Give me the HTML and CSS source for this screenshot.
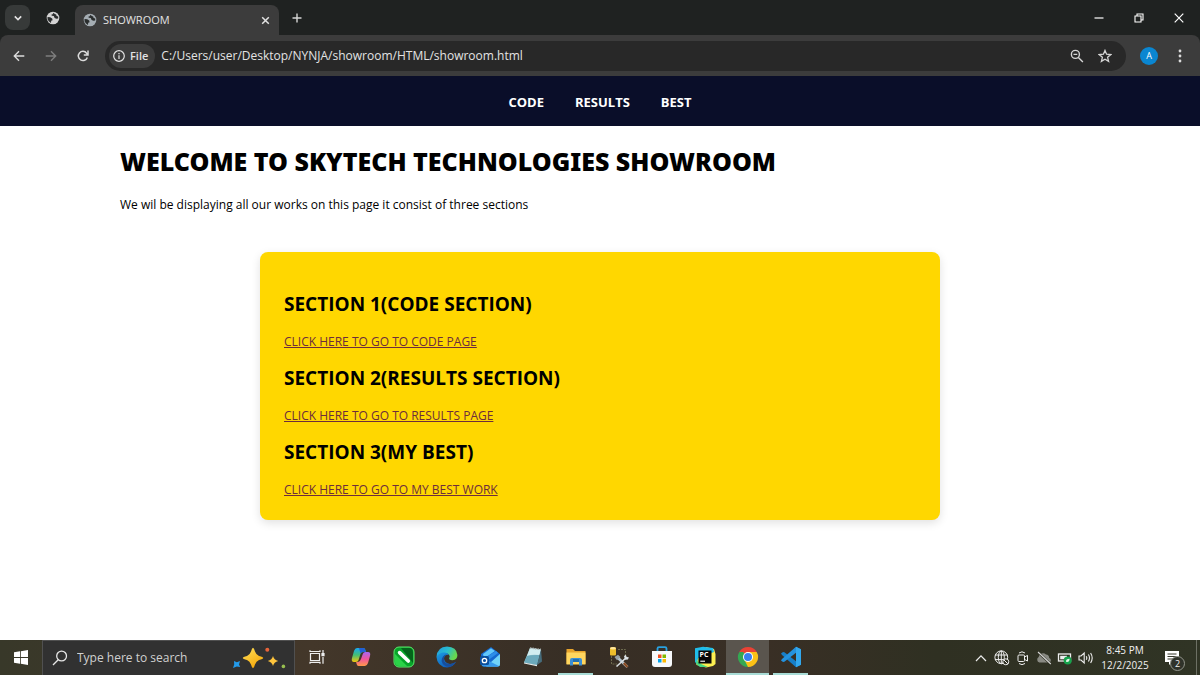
FILE: index.html
```html
<!DOCTYPE html>
<html lang="en">
<head>
<meta charset="utf-8">
<title>SHOWROOM</title>
<link rel="stylesheet" href="styles.css">
</head>
<body>
<svg class="defs" aria-hidden="true">
  <symbol id="globe" viewBox="0 0 14 14">
    <circle cx="7" cy="7" r="6.3" fill="currentColor"/>
    <path d="M1.5 6 L4.2 6.2 L6.2 7.4 L6.6 9.2 L5.2 9.8 L5 12 L3 10.6 L1.6 8.4 Z M7.6 1.8 L6.6 3.2 L5.3 3.8 L5.8 4.8 L7.8 5 L8.6 7 L10.4 7.8 L12.2 7.4 L12.2 5.6 L10.6 5 L10.2 3.4 L8.8 3 Z" fill="#2a2d2d"/>
  </symbol>
</svg>

<header class="browser">
  <div class="tabstrip">
    <button class="tab-search" aria-label="Search tabs"><svg width="10" height="10" viewBox="0 0 10 10" fill="none" stroke="#e3e3e3" stroke-width="1.6"><path d="M1.8 3.4 L5 6.6 L8.2 3.4"/></svg></button>
    <button class="tab-mini" aria-label="Tab"><svg width="14" height="14"><use href="#globe"/></svg></button>
    <div class="tab">
      <svg class="favicon" width="14" height="14"><use href="#globe"/></svg>
      <span class="tab-title">SHOWROOM</span>
      <button aria-label="Close tab"><svg width="9" height="9" viewBox="0 0 9 9" stroke="#e3e3e3" stroke-width="1.5"><path d="M1.2 1.2 L7.8 7.8 M7.8 1.2 L1.2 7.8"/></svg></button>
    </div>
    <button class="new-tab" aria-label="New tab"><svg width="10" height="10" viewBox="0 0 10 10" stroke="#d5d5d5" stroke-width="1.4"><path d="M5 .5 V9.5 M.5 5 H9.5"/></svg></button>
    <div class="window-controls">
      <button aria-label="Minimize"><svg width="10" height="10" viewBox="0 0 10 10" stroke="#fff" stroke-width="1.2"><path d="M.5 5 H9.5"/></svg></button>
      <button aria-label="Restore"><svg width="10" height="10" viewBox="0 0 10 10" fill="none" stroke="#fff" stroke-width="1.1"><path d="M1 3 H7 V9 H1 Z M3 3 V1 H9 V7 H7"/></svg></button>
      <button aria-label="Close"><svg width="10" height="10" viewBox="0 0 10 10" stroke="#fff" stroke-width="1.2"><path d="M.7 .7 L9.3 9.3 M9.3 .7 L.7 9.3"/></svg></button>
    </div>
  </div>
  <div class="toolbar">
    <button class="tool" aria-label="Back"><svg width="12" height="12" viewBox="0 0 12 12" fill="none" stroke="#dcdcdc" stroke-width="1.4"><path d="M11.3 6 H1.5 M6 1.3 L1.3 6 L6 10.7"/></svg></button>
    <button class="tool" aria-label="Forward"><svg width="12" height="12" viewBox="0 0 12 12" fill="none" stroke="#7d7d7d" stroke-width="1.4"><path d="M.7 6 H10.5 M6 1.3 L10.7 6 L6 10.7"/></svg></button>
    <button class="tool" aria-label="Reload"><svg width="12" height="12" viewBox="0 0 12 12" fill="none" stroke="#dcdcdc" stroke-width="1.5"><path d="M10.3 7.4 A4.6 4.6 0 1 1 9.6 3.2 L10.8 4.6 M11 .6 V4.9 H6.8"/></svg></button>
    <div class="omnibox">
      <button class="scheme"><svg width="12" height="12" viewBox="0 0 12 12" fill="none" stroke="#e3e3e3" stroke-width="1.2"><circle cx="6" cy="6" r="5.3"/><path d="M6 5.2 V9 M6 2.9 V4.2"/></svg>File</button>
      <input class="address" type="text" aria-label="Address" value="C:/Users/user/Desktop/NYNJA/showroom/HTML/showroom.html">
      <button class="tool" aria-label="Zoom"><svg width="14" height="14" viewBox="0 0 14 14" fill="none" stroke="#d5d5d5" stroke-width="1.4"><circle cx="5.4" cy="5.4" r="4"/><path d="M8.4 8.4 L12.9 12.9 M3.5 5.4 H7.3"/></svg></button>
      <button class="tool" aria-label="Bookmark"><svg width="14" height="14" viewBox="0 0 14 14" fill="none" stroke="#d5d5d5" stroke-width="1.3"><path d="M7 1.4 L8.6 5.2 L12.8 5.6 L9.6 8.3 L10.6 12.4 L7 10.2 L3.4 12.4 L4.4 8.3 L1.2 5.6 L5.4 5.2 Z"/></svg></button>
    </div>
    <button class="avatar" aria-label="Profile">A</button>
    <button class="tool" aria-label="Menu"><svg width="4" height="14" viewBox="0 0 4 14" fill="#dcdcdc"><circle cx="2" cy="2" r="1.4"/><circle cx="2" cy="7" r="1.4"/><circle cx="2" cy="12" r="1.4"/></svg></button>
  </div>
</header>

<nav class="site-nav">
  <a href="#code">CODE</a>
  <a href="#results">RESULTS</a>
  <a href="#best">BEST</a>
</nav>

<main class="page">
  <h1>WELCOME TO SKYTECH TECHNOLOGIES SHOWROOM</h1>
  <p class="intro">We wil be displaying all our works on this page it consist of three sections</p>
  <div class="card">
    <section id="code"><h2>SECTION 1(CODE SECTION)</h2><a href="#code">CLICK HERE TO GO TO CODE PAGE</a></section>
    <section id="results"><h2>SECTION 2(RESULTS SECTION)</h2><a href="#results">CLICK HERE TO GO TO RESULTS PAGE</a></section>
    <section id="best"><h2>SECTION 3(MY BEST)</h2><a href="#best">CLICK HERE TO GO TO MY BEST WORK</a></section>
  </div>
</main>

<footer class="taskbar">
  <button class="start" aria-label="Start"><svg width="14" height="15" viewBox="0 0 14 15" fill="#fff"><path d="M0 2.2 L6 1.3 V7.1 H0 Z M6.8 1.2 L14 .1 V7.1 H6.8 Z M0 7.9 H6 V13.7 L0 12.8 Z M6.8 7.9 H14 V14.9 L6.8 13.8 Z"/></svg></button>
  <div class="search">
    <svg width="16" height="16" viewBox="0 0 16 16" fill="none" stroke="#e6e6e6" stroke-width="1.3"><circle cx="9.6" cy="6" r="4.9"/><path d="M6.2 9.7 L1 15"/></svg>
    <input type="text" aria-label="Type here to search" placeholder="Type here to search">
    <svg width="54" height="22" viewBox="0 0 54 22">
      <defs><linearGradient id="gold" x2="0.6" y2="1"><stop offset="0" stop-color="#ffe15a"/><stop offset="1" stop-color="#f5a80c"/></linearGradient></defs>
      <path d="M21 .8 Q22 .8 23 4.5 Q24.2 8 27 9 Q31.2 10 31.2 11 Q31.2 12 27 13 Q24.2 14 23 17.5 Q22 21.2 21 21.2 Q20 21.2 19 17.5 Q17.8 14 15 13 Q10.8 12 10.8 11 Q10.8 10 15 9 Q17.8 8 19 4.5 Q20 .8 21 .8 Z" fill="url(#gold)"/>
      <path d="M41 9 Q42 12.8 46.2 14 Q42 15.2 41 19 Q40 15.2 35.8 14 Q40 12.8 41 9 Z" fill="#ffc53d"/>
      <path d="M2 14 L4.8 15.2 L8 14 L7 17.5 L8.2 20 L4.8 19.4 L1 21 L2.2 17.5 Z" fill="#249bea"/>
      <circle cx="35.3" cy="2.8" r="2" fill="#e8643a"/><circle cx="51.4" cy="19.4" r="1.8" fill="#98bf50"/>
    </svg>
  </div>
  <div class="apps">
    <button class="task-view" aria-label="Task view"><svg width="16" height="16" viewBox="0 0 16 16" fill="none" stroke="#eee" stroke-width="1.2"><path d="M1.5 4.5 H10.5 V11.5 H1.5 Z M1 1.2 V2.5 H11 V1.2 M1 14.8 V13.4 H11 V14.8 M14 1 V4 M14 8 V14.8"/><path d="M13 4.6 H15 V6.6 H13 Z" fill="#eee"/></svg></button>
    <button aria-label="Copilot"><svg width="20" height="20" viewBox="0 0 20 20">
      <defs><linearGradient id="cpa" x2="0" y2="1"><stop offset="0" stop-color="#17a8f2"/><stop offset=".5" stop-color="#43bf75"/><stop offset="1" stop-color="#f3c50d"/></linearGradient><linearGradient id="cpb" x2="0" y2="1"><stop offset="0" stop-color="#a766f3"/><stop offset=".5" stop-color="#f0549d"/><stop offset="1" stop-color="#ff9848"/></linearGradient></defs>
      <path d="M6 1 H12.5 Q14 1 14.4 3 L14.9 5 H12 Q10 5 9.4 7 L7.6 13 Q7 15 5 15 H3 Q0 15 1 11 L3 4 Q4 1 6 1 Z" fill="url(#cpa)"/>
      <path d="M14 19 H7.5 Q6 19 5.6 17 L5.1 15 H7 Q9 15 10 12 L11.8 7 Q12.4 5 14.5 5 H17 Q20 5 19 9 L17 16 Q16 19 14 19 Z" fill="url(#cpb)"/>
      <path d="M8 1 H12.5 Q14 1 14.9 5 H12 Q10 5 9.5 6.5 Z" fill="#2160d6"/></svg></button>
    <button aria-label="CorelDRAW"><svg width="22" height="22" viewBox="0 0 22 22"><rect x="1" y="1" width="20" height="20" rx="5" fill="#08a52a" stroke="#5de66b"/><path d="M8 2 H16 Q20 2 20 7 V17 Z" fill="#04641b"/><path d="M2 8 L14 20 H6 Q2 20 2 16 Z" fill="#2bd348"/><path d="M6.6 6.6 L15.3 15" stroke="#fff" stroke-width="3.6" stroke-linecap="round"/></svg></button>
    <button aria-label="Edge"><svg width="22" height="22" viewBox="0 0 22 22">
      <defs><linearGradient id="edg" x2="1" y2=".4"><stop offset="0" stop-color="#239be0"/><stop offset=".55" stop-color="#28bdcf"/><stop offset="1" stop-color="#68d84d"/></linearGradient><linearGradient id="edb" x2=".7" y2="1"><stop offset="0" stop-color="#1b9de2"/><stop offset="1" stop-color="#1059b8"/></linearGradient></defs>
      <path d="M.5 11 Q1.2 1 11 .6 Q20.7 1 21.4 9 Q21.4 14 16.5 14.2 Q12.5 14 13.2 12 Q14.4 10.5 13 8.7 Q11 6.4 7.5 7.2 Q3 8 .5 11 Z" fill="url(#edg)"/>
      <path d="M.5 11 Q3.5 5.8 9 6.6 Q11.8 7.2 12.8 8.8 Q8.8 8.2 8 12 Q8 17.2 14 17.9 Q17.6 18.1 20 15.8 Q17 21.4 11 21.4 Q1.2 20.8 .5 11 Z" fill="url(#edb)"/>
      <path d="M8 12 Q7.4 18 14 18.1 Q18 18 20 15.8 Q18.5 19.2 14 20.8 Q7 21 5.6 15 Q5.8 9.5 11 8.3 Q8.5 9.2 8 12 Z" fill="#174e9d"/></svg></button>
    <button aria-label="Outlook"><svg width="22" height="22" viewBox="0 0 22 22"><path d="M2 8 L12 1 L21 8 V18 Q21 20.5 18.5 20.5 H5 Q2.5 20.5 2.5 18 Z" fill="#1568cf"/><path d="M4 8 L12 2.3 L16 5 L5 12.5 Z" fill="#61c7fb"/><path d="M5 12.5 L17 5 L19 7 L8 15 Z" fill="#2c8ee9"/><path d="M21 8 V18 Q21 20.5 18.5 20.5 H7 Z" fill="#71d3fa"/><path d="M3 12 L12 16 L19.8 20 Q19 20.5 18 20.5 H5 Q2.5 20.5 2.5 18 Z" fill="#3599ed"/><rect x="1" y="10" width="9" height="9" rx="1.6" fill="#0b4f9d"/><circle cx="5.5" cy="14.5" r="2.2" fill="none" stroke="#fff" stroke-width="1.3"/></svg></button>
    <button aria-label="Notepad"><svg width="22" height="22" viewBox="0 0 22 22"><path d="M8 2 L19 3.4 L15 19 L2 16.5 Z" fill="#91c4cf"/><path d="M8 2 L19 3.4 L17.5 9 Q10 8 5 10 Z" fill="#d2edf0"/><path d="M5 10 Q11 8.6 17.5 9 L15 19 L2 16.5 Z" fill="#6caabc"/><path d="M19 3.4 L20 15.4 L15 19 Z" fill="#476d7c"/><path d="M2 16.5 L15 19 L15 20.3 L2 17.5 Z" fill="#e6ecec"/><path d="M8 2 L19 3.4" stroke="#a9b2b1" stroke-width="1.5" stroke-dasharray="1.5 1"/></svg></button>
    <button class="open" aria-label="File Explorer"><svg width="22" height="20" viewBox="0 0 22 20"><path d="M1.5 2 H8 L10 4 H20.5 V17 H1.5 Z" fill="#e7a42c"/><path d="M1.5 5.5 H20.5 V17.5 H1.5 Z" fill="#ffd65f"/><path d="M5 18.5 V13 Q5 11 7 11 H15 Q17 11 17 13 V18.5 H14 V15 H8 V18.5 Z" fill="#3b8ed4"/><path d="M8 12 H14 V15 H8 Z" fill="#236fad"/></svg></button>
    <button aria-label="Tools"><svg width="22" height="22" viewBox="0 0 22 22"><path d="M10 3.5 H17.5 V10 M3.5 10 V18 H9" fill="none" stroke="#6d6a4e" stroke-dasharray="2 1"/><rect x="2" y="1.5" width="6" height="8" rx="1" fill="#edbd2c"/><ellipse cx="5" cy="2.2" rx="3" ry="1.2" fill="#ffe69a"/><path d="M9 11 L19.5 21" stroke="#b4c4ce" stroke-width="2.6"/><path d="M19 11 L8.5 20.5" stroke="#dbe0e2" stroke-width="1.6"/><path d="M6.5 11 L10 8.8 L12.5 11 L9 14.2 Z" fill="#97a2a8"/><path d="M16 10 L18 8.8 L18.3 11 L20.8 11.2 L20 13.5 L17 13.8 Z" fill="#dce3e7"/><path d="M15.8 17 L19.5 21" stroke="#8b4d24" stroke-width="2.4"/></svg></button>
    <button aria-label="Microsoft Store"><svg width="22" height="22" viewBox="0 0 22 22"><path d="M6.5 6 V2.5 Q6.5 1.2 8 1.2 H14 Q15.5 1.2 15.5 2.5 V6" fill="none" stroke="#29a1df" stroke-width="1.8"/><path d="M1 5 H21 V18 Q21 21 18 21 H4 Q1 21 1 18 Z" fill="#f7f9fb"/><path d="M7 8.5 H10.5 V12 H7 Z" fill="#f25022"/><path d="M11.5 8.5 H15 V12 H11.5 Z" fill="#7fba00"/><path d="M7 13 H10.5 V16.5 H7 Z" fill="#00a4ef"/><path d="M11.5 13 H15 V16.5 H11.5 Z" fill="#ffb900"/></svg></button>
    <button aria-label="PyCharm"><svg width="22" height="22" viewBox="0 0 22 22"><path d="M12 1 L20 3 L21.5 8 V18 L19 20 L12 21.5 L2.5 19 L2 15 Z" fill="#fcef51"/><path d="M1 2.2 L9 .7 L19 2 L20 6 L4 12 L3 18 L1 16 Z" fill="#20bdea"/><path d="M2 14 L7 18 L14 21 L6 21 L2.3 18 Z" fill="#48da83"/><rect x="4.5" y="4.5" width="13" height="13" fill="#080808"/><text class="logo-text" x="5.6" y="11.4">PC</text><path d="M6.3 15.2 H11" stroke="#fff" stroke-width="1.1"/></svg></button>
    <button class="open active" aria-label="Chrome"><svg width="22" height="22" viewBox="0 0 22 22"><path d="M11 11 L2.3 6 A10 10 0 0 1 19.7 6 Z" fill="#e94235"/><path d="M11 11 L19.7 6 A10 10 0 0 1 11 21 Z" fill="#fbc116"/><path d="M11 11 L11 21 A10 10 0 0 1 2.3 6 Z" fill="#34a853"/><path d="M11 6 H19.7 L15.3 13.5 Z" fill="#fbc116"/><path d="M2.3 6 L6.7 13.5 L11 11 L6 6 Z" fill="#34a853"/><path d="M15.3 13.5 L11 21 L8 15 Z" fill="#fbc116"/><circle cx="11" cy="11" r="5" fill="#fff"/><circle cx="11" cy="11" r="4" fill="#397ff1"/></svg></button>
    <button class="open" aria-label="Visual Studio Code"><svg width="22" height="22" viewBox="0 0 22 22"><path d="M16 .8 L21 3.2 V18.8 L16 21.2 L2 9 L1 7.6 L3 6 L4.4 6.3 L16 15.2 Z" fill="#177fc8"/><path d="M16 .8 V6.8 L4.4 15.7 L3 16 L1 14.4 L2 13 Z" fill="#2492de"/><path d="M16 .8 L21 3.2 V18.8 L16 21.2 Z" fill="#32a8ee"/></svg></button>
  </div>
  <div class="tray">
    <button aria-label="Show hidden icons"><svg width="12" height="8" viewBox="0 0 12 8" fill="none" stroke="#eee" stroke-width="1.2"><path d="M1 7 L6 1.8 L11 7"/></svg></button>
    <button aria-label="Network"><svg width="16" height="16" viewBox="0 0 16 16" fill="none" stroke="#eee"><circle cx="7.3" cy="7.3" r="6.4"/><ellipse cx="7.3" cy="7.3" rx="3" ry="6.4"/><path d="M1 5 H13.6 M1 9.6 H13.6 M7.3 1 V13.6"/><circle cx="11.8" cy="11.8" r="3" fill="#2f3021"/><path d="M9.8 9.8 L13.8 13.8"/></svg></button>
    <button aria-label="Camera"><svg width="12" height="16" viewBox="0 0 12 16" fill="none" stroke="#eee"><rect x="1" y="5" width="6.5" height="6.5" rx="1"/><path d="M7.5 7 L10.5 5.4 V11 L7.5 9.4 M2 3 Q5 .6 8 3 M2 13.5 Q5 15.8 8 13.5"/></svg></button>
    <button aria-label="Cloud sync"><svg width="16" height="14" viewBox="0 0 16 14"><path d="M3.4 11.5 A3 3 0 0 1 2.7 6 A4.2 4.2 0 0 1 10 3.6 A3.6 3.6 0 0 1 13.2 7 A2.5 2.5 0 0 1 13.6 11.5 Z" fill="#898a83"/><path d="M2 1.2 L14.5 13" stroke="#2f3021" stroke-width="2.4"/><path d="M2 1 L14.8 13" stroke="#d8d8d8" stroke-width="1.1"/></svg></button>
    <button aria-label="Battery"><svg width="16" height="14" viewBox="0 0 16 14"><rect x="1.5" y="3" width="12" height="7" fill="none" stroke="#eee" stroke-width="1.3"/><path d="M3.2 4.8 H10 V8.3 H3.2 Z" fill="#eee"/><circle cx="10.7" cy="9.6" r="4" fill="#16a34c"/><path d="M9 10.8 Q8.7 7.8 12.6 7.7 Q12.5 11.5 9 10.8 Z" fill="#e3f4e7"/></svg></button>
    <button aria-label="Volume"><svg width="16" height="14" viewBox="0 0 16 14" fill="none" stroke="#eee" stroke-width="1.1"><path d="M1 5 H3 L6.2 2 V12 L3 9 H1 Z M8.2 5.2 Q9.4 7 8.2 8.8 M10.4 3.5 Q12.6 7 10.4 10.5 M12.6 2 Q15.8 7 12.6 12"/></svg></button>
    <button class="clock"><span>8:45 PM</span><span>12/2/2025</span></button>
    <button class="notify" aria-label="Notifications"><svg width="16" height="16" viewBox="0 0 16 16"><path d="M1 1 H15 V12 H8 L5 15 V12 H1 Z" fill="#fff"/><path d="M3.5 4 H12.5 M3.5 6.5 H12.5 M3.5 9 H9" stroke="#36382b"/></svg><span class="count">2</span></button>
  </div>
</footer>
</body>
</html>
```

FILE: styles.css
```css
* { box-sizing: border-box; }

body {
  margin: 0;
  min-height: 100vh;
  display: flex;
  flex-direction: column;
  background: #fff;
  color: #000;
  font: 13px/20px "Open Sans", "Noto Sans", sans-serif;
}

button, input {
  font: inherit;
  color: inherit;
  background: none;
  border: 0;
  padding: 0;
  margin: 0;
}
button {
  display: flex;
  align-items: center;
  justify-content: center;
  flex: none;
}
svg { display: block; flex: none; }
.defs { position: absolute; width: 0; height: 0; }

/* Browser window */
.browser { background: #1f2221; color: #e3e3e3; }
.tabstrip { display: flex; align-items: center; height: 35px; padding-left: 5px; }
.tab-search { width: 25px; height: 25px; border-radius: 8px; background: #373a39; }
.tab-mini { width: 45px; height: 30px; color: #d3d3d3; }
.tab {
  display: flex;
  align-items: center;
  align-self: flex-end;
  gap: 6px;
  width: 204px;
  height: 30px;
  padding: 0 8px;
  border-radius: 8px 8px 0 0;
  background: #3c3c3c;
  font-size: 11px;
}
.favicon { color: #a5adb3; }
.tab-title { flex: 1; }
.tab button { width: 12px; height: 20px; }
.new-tab { width: 36px; height: 30px; }
.window-controls { display: flex; margin-left: auto; padding-right: 1px; }
.window-controls button { width: 40px; height: 35px; }

.toolbar {
  display: flex;
  align-items: center;
  gap: 8px;
  height: 41px;
  padding: 0 8px 0 7px;
  background: #3c3c3c;
  border-radius: 8px 8px 0 0;
}
.tool { width: 24px; height: 26px; }
.omnibox {
  display: flex;
  align-items: center;
  gap: 4px;
  flex: 1;
  height: 30px;
  margin-left: 2px;
  padding: 0 9px 0 4px;
  border-radius: 15px;
  background: #282828;
}
.scheme {
  gap: 5px;
  height: 24px;
  padding: 0 7px 0 4px;
  border-radius: 12px;
  background: #3c3c3c;
  font-size: 11px;
  font-weight: 600;
}
.address { flex: 1; min-width: 0; padding-left: 2px; font-size: 12px; }
.avatar {
  width: 18px;
  height: 18px;
  margin: 0 2px 0 6px;
  border-radius: 50%;
  background: #0a86d1;
  color: #fff;
  font-size: 9px;
}

/* Site */
.site-nav {
  display: flex;
  justify-content: center;
  gap: 31px;
  padding: 16px 0 14px;
  background: #0a0e29;
  font-size: 13px;
  font-weight: 700;
}
.site-nav a { color: #fff; text-decoration: none; }

.page { flex: 1; width: 80%; margin: 0 auto; }
h1 {
  margin: 18px 0 16px;
  font: 900 25px/35px "Noto Sans", "Open Sans", sans-serif;
}
.intro { margin: 0; font-size: 12px; }
.card {
  display: flex;
  flex-direction: column;
  gap: 12px;
  max-width: 680px;
  margin: 37px auto;
  padding: 38px 24px 20px;
  border-radius: 8px;
  background: #ffd700;
  box-shadow: 0 3px 10px rgba(0, 0, 0, .12);
}
.card h2 { margin: 0 0 14px; font-size: 19px; line-height: 28px; font-weight: 700; }
.card a { display: block; width: fit-content; color: #6d2d3c; font-size: 12px; }

/* Taskbar */
.taskbar {
  display: flex;
  height: 35px;
  background: linear-gradient(90deg, #383829 0, #43372a 26%, #372e25 48%, #392f25 64%, #2f3022 78%, #303425 100%);
  color: #f0f0f0;
}
.start { width: 42px; }
.search {
  display: flex;
  align-items: center;
  gap: 9px;
  width: 253px;
  padding: 0 8px 0 9px;
  border: 1px solid #505050;
  border-bottom: 0;
  background: #313131;
}
.search input { flex: 1; min-width: 0; font-size: 12px; }
.search input::placeholder { color: #d0d0d0; opacity: 1; }
.apps { display: flex; }
.apps button { width: 43px; border-bottom: 2px solid transparent; }
.apps .task-view { width: 44px; }
.apps .open {
  background: linear-gradient(#a8dcd6, #a8dcd6) center bottom / 35px 2px no-repeat border-box;
}
.apps .active { background: #5a554e; border-bottom-color: #a8dcd6; }
.logo-text { font: 700 7px "Open Sans", sans-serif; fill: #fff; }
.tray { display: flex; margin-left: auto; padding-right: 3px; }
.tray button { width: 21px; }
.tray .clock { flex-direction: column; width: 58px; font-size: 10px; line-height: 15px; }
.tray .notify {
  position: relative;
  width: 43px;
  padding-right: 7px;
  border-right: 1px solid #6d7064;
}
.count {
  position: absolute;
  right: 11px;
  bottom: 4px;
  width: 15px;
  height: 15px;
  border: 1px solid #92958b;
  border-radius: 50%;
  background: #30332a;
  font-size: 9px;
  line-height: 13px;
  text-align: center;
}
```
